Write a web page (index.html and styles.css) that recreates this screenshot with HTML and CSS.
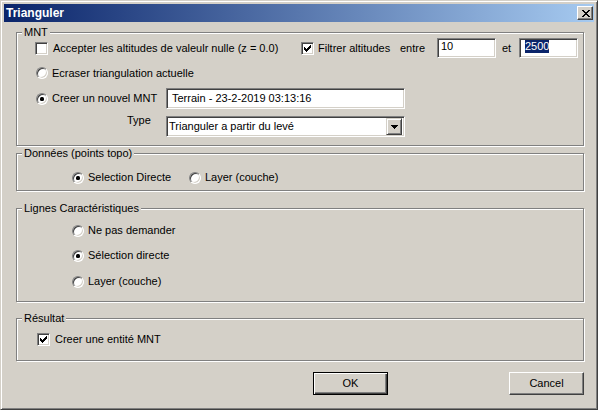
FILE: index.html
```html
<!DOCTYPE html>
<html lang="fr">
<head>
<meta charset="utf-8">
<title>Trianguler</title>
<link rel="stylesheet" href="styles.css">
</head>
<body>
<div class="window">
  <div class="titlebar">
    <span class="title">Trianguler</span>
    <span class="close-btn">
      <svg width="8" height="7" viewBox="0 0 8 7" shape-rendering="crispEdges">
        <rect x="0" y="0" width="2" height="1"/><rect x="6" y="0" width="2" height="1"/>
        <rect x="1" y="1" width="2" height="1"/><rect x="5" y="1" width="2" height="1"/>
        <rect x="2" y="2" width="4" height="1"/>
        <rect x="3" y="3" width="2" height="1"/>
        <rect x="2" y="4" width="4" height="1"/>
        <rect x="1" y="5" width="2" height="1"/><rect x="5" y="5" width="2" height="1"/>
        <rect x="0" y="6" width="2" height="1"/><rect x="6" y="6" width="2" height="1"/>
      </svg>
    </span>
  </div>
  <div class="content">
    <section class="group g-mnt">
      <div class="group-title">MNT</div>
      <div class="group-body">
        <div class="row row1">
          <span class="opt opt-accept"><span class="cb"></span><span>Accepter les altitudes de valeulr nulle (z = 0.0)</span></span>
          <span class="opt opt-filter"><span class="cb">
            <svg width="7" height="7" viewBox="0 0 7 7" shape-rendering="crispEdges"><rect x="0" y="2" width="1" height="3"/><rect x="1" y="3" width="1" height="3"/><rect x="2" y="4" width="1" height="3"/><rect x="3" y="3" width="1" height="3"/><rect x="4" y="2" width="1" height="3"/><rect x="5" y="1" width="1" height="3"/><rect x="6" y="0" width="1" height="3"/></svg>
          </span><span>Filtrer altitudes</span></span>
          <span class="lbl lbl-entre">entre</span>
          <span class="field field-small">10</span>
          <span class="lbl lbl-et">et</span>
          <span class="field field-small field-sel"><span class="sel">2500</span></span>
        </div>
        <div class="row row2">
          <span class="opt"><span class="rb"></span><span>Ecraser triangulation actuelle</span></span>
        </div>
        <div class="row row3">
          <span class="opt opt-new"><span class="rb on"></span><span>Creer un nouvel MNT</span></span>
          <span class="field field-name">Terrain - 23-2-2019 03:13:16</span>
        </div>
        <div class="row row4">
          <span class="type-lbl">Type</span>
          <span class="combo">
            <span class="combo-text">Trianguler a partir du levé</span>
            <span class="combo-btn">
              <svg width="7" height="4" viewBox="0 0 7 4" shape-rendering="crispEdges"><rect x="0" y="0" width="7" height="1"/><rect x="1" y="1" width="5" height="1"/><rect x="2" y="2" width="3" height="1"/><rect x="3" y="3" width="1" height="1"/></svg>
            </span>
          </span>
        </div>
      </div>
    </section>

    <section class="group g-donnees">
      <div class="group-title">Données (points topo)</div>
      <div class="group-body">
        <div class="row row-radios">
          <span class="opt opt-direct"><span class="rb on"></span><span>Selection Directe</span></span>
          <span class="opt"><span class="rb"></span><span>Layer (couche)</span></span>
        </div>
      </div>
    </section>

    <section class="group g-lignes">
      <div class="group-title">Lignes Caractéristiques</div>
      <div class="group-body">
        <div class="row lr1"><span class="opt"><span class="rb"></span><span>Ne pas demander</span></span></div>
        <div class="row lr2"><span class="opt"><span class="rb on"></span><span>Sélection directe</span></span></div>
        <div class="row lr3"><span class="opt"><span class="rb"></span><span>Layer (couche)</span></span></div>
      </div>
    </section>

    <section class="group g-resultat">
      <div class="group-title">Résultat</div>
      <div class="group-body">
        <div class="row rr1">
          <span class="opt"><span class="cb">
            <svg width="7" height="7" viewBox="0 0 7 7" shape-rendering="crispEdges"><rect x="0" y="2" width="1" height="3"/><rect x="1" y="3" width="1" height="3"/><rect x="2" y="4" width="1" height="3"/><rect x="3" y="3" width="1" height="3"/><rect x="4" y="2" width="1" height="3"/><rect x="5" y="1" width="1" height="3"/><rect x="6" y="0" width="1" height="3"/></svg>
          </span><span>Creer une entité MNT</span></span>
        </div>
      </div>
    </section>

    <div class="buttons">
      <span class="btn btn-default">OK</span>
      <span class="btn">Cancel</span>
    </div>
  </div>
</div>
</body>
</html>
```

FILE: styles.css
```css
* { box-sizing: border-box; }

html, body {
  margin: 0;
  padding: 0;
  background: #ffffff;
}

body {
  font-family: "Liberation Sans", Arial, sans-serif;
  font-size: 11px;
  line-height: 13px;
  color: #000;
}

.window {
  width: 598px;
  height: 410px;
  background: #d4d0c8;
  border: 1px solid;
  border-color: #d4d0c8 #404040 #404040 #d4d0c8;
  box-shadow: inset 1px 1px #ffffff, inset -1px -1px #808080;
  padding: 3px;
  display: flex;
  flex-direction: column;
}

/* Title bar */
.titlebar {
  height: 18px;
  display: flex;
  align-items: center;
  justify-content: space-between;
  padding: 0 1px 0 2px;
  background: linear-gradient(to right, #0a246a, #a6caf0);
}

.title {
  color: #fff;
  font-weight: bold;
  font-size: 12px;
  line-height: 14px;
}

.close-btn {
  width: 16px;
  height: 14px;
  display: flex;
  align-items: center;
  justify-content: center;
  background: #d4d0c8;
  border: 1px solid;
  border-color: #fff #404040 #404040 #fff;
  box-shadow: inset -1px -1px #808080;
  padding-left: 1px;
}

.close-btn svg { display: block; fill: #000; }

/* Content */
.content {
  padding: 10px 0 0 12px;
  display: flex;
  flex-direction: column;
}

.group {
  width: 568px;
  border: 1px solid #808080;
  box-shadow: inset 1px 1px #ffffff, 1px 1px #ffffff;
  display: flex;
  flex-direction: column;
}

.group-title {
  align-self: flex-start;
  margin: -7px 0 0 5px;
  padding: 0 2px;
  height: 12px;
  line-height: 12px;
  background: #d4d0c8;
}

.group-body {
  display: flex;
  flex-direction: column;
}

.row {
  display: flex;
  align-items: center;
}

.opt {
  display: flex;
  align-items: center;
  white-space: nowrap;
}

/* Checkbox */
.cb {
  width: 13px;
  height: 13px;
  flex: none;
  background: #fff;
  border: 1px solid;
  border-color: #808080 #fff #fff #808080;
  box-shadow: inset 1px 1px #404040, inset -1px -1px #d4d0c8;
  margin-right: 5px;
  padding: 2px 0 0 2px;
}

.cb svg { display: block; fill: #000; }

/* Radio */
.rb {
  width: 12px;
  height: 12px;
  flex: none;
  border-radius: 50%;
  background: #fff;
  border: 1px solid;
  border-color: #808080 #fff #fff #808080;
  box-shadow: inset 1px 1px #404040, inset -1px -1px #d4d0c8;
  margin-right: 4px;
  display: flex;
  align-items: center;
  justify-content: center;
}

.rb.on::after {
  content: "";
  width: 4px;
  height: 4px;
  border-radius: 1.5px;
  background: #000;
}

/* Sunken field */
.field {
  background: #fff;
  border: 1px solid;
  border-color: #808080 #fff #fff #808080;
  box-shadow: inset 1px 1px #404040, inset -1px -1px #d4d0c8;
  white-space: nowrap;
}

/* MNT group */
.g-mnt .group-body {
  padding: 0 0 8px 18px;
}

.row1 { height: 21px; }

.opt-accept { width: 266px; }
.opt-filter { width: 99px; }
.opt-filter .cb { margin-right: 4px; }

.lbl-entre { width: 37px; }
.lbl-et { width: 23px; padding-left: 6px; }

.field-small {
  width: 59px;
  height: 20px;
  align-self: flex-start;
  padding: 1px 0 0 3px;
}

.field-sel { padding-left: 5px; }

.sel {
  background: #0a246a;
  color: #fff;
  display: inline-block;
}

.row2 { height: 20px; margin-top: 4px; padding-left: 1px; }

.row3 { height: 21px; margin-top: 5px; padding-left: 1px; }

.opt-new { width: 130px; }

.field-name {
  width: 239px;
  height: 21px;
  padding: 2px 0 0 5px;
  line-height: 15px;
}

.row4 { height: 21px; margin-top: 7px; }

.type-lbl {
  width: 39px;
  margin-left: 92px;
  align-self: flex-start;
  margin-top: -2px;
}

.combo {
  width: 239px;
  height: 21px;
  display: flex;
  align-items: center;
  background: #fff;
  border: 1px solid;
  border-color: #808080 #fff #fff #808080;
  box-shadow: inset 1px 1px #404040, inset -1px -1px #d4d0c8;
  padding: 2px;
}

.combo-text { flex: 1; }

.combo-btn {
  width: 16px;
  height: 17px;
  flex: none;
  display: flex;
  align-items: center;
  justify-content: center;
  background: #d4d0c8;
  border: 1px solid;
  border-color: #d4d0c8 #404040 #404040 #d4d0c8;
  box-shadow: inset 1px 1px #fff, inset -1px -1px #808080;
  padding-top: 1px;
}

.combo-btn svg { display: block; fill: #000; }

/* Données */
.g-donnees { margin-top: 7px; }

.g-donnees .group-body { padding: 0 0 6px 55px; }

.row-radios { height: 13px; margin-top: 12px; }

.opt-direct { width: 117px; }

/* Lignes */
.g-lignes { margin-top: 17px; }

.g-lignes .group-body { padding: 0 0 13px 55px; }

.lr1 { height: 13px; margin-top: 10px; }
.lr2 { height: 13px; margin-top: 12px; }
.lr3 { height: 13px; margin-top: 13px; }

/* Résultat */
.g-resultat { margin-top: 16px; }

.g-resultat .group-body { padding: 0 0 14px 20px; }

.rr1 { height: 13px; margin-top: 9px; }

/* Buttons */
.buttons {
  margin-top: 11px;
  display: flex;
  gap: 121px;
  padding-left: 297px;
}

.btn {
  width: 75px;
  height: 23px;
  display: flex;
  align-items: center;
  justify-content: center;
  background: #d4d0c8;
  border: 1px solid;
  border-color: #fff #404040 #404040 #fff;
  box-shadow: inset -1px -1px #808080;
}

.btn-default {
  border-color: #000;
  box-shadow: inset 1px 1px #fff, inset -1px -1px #404040, inset -2px -2px #808080;
}
```
